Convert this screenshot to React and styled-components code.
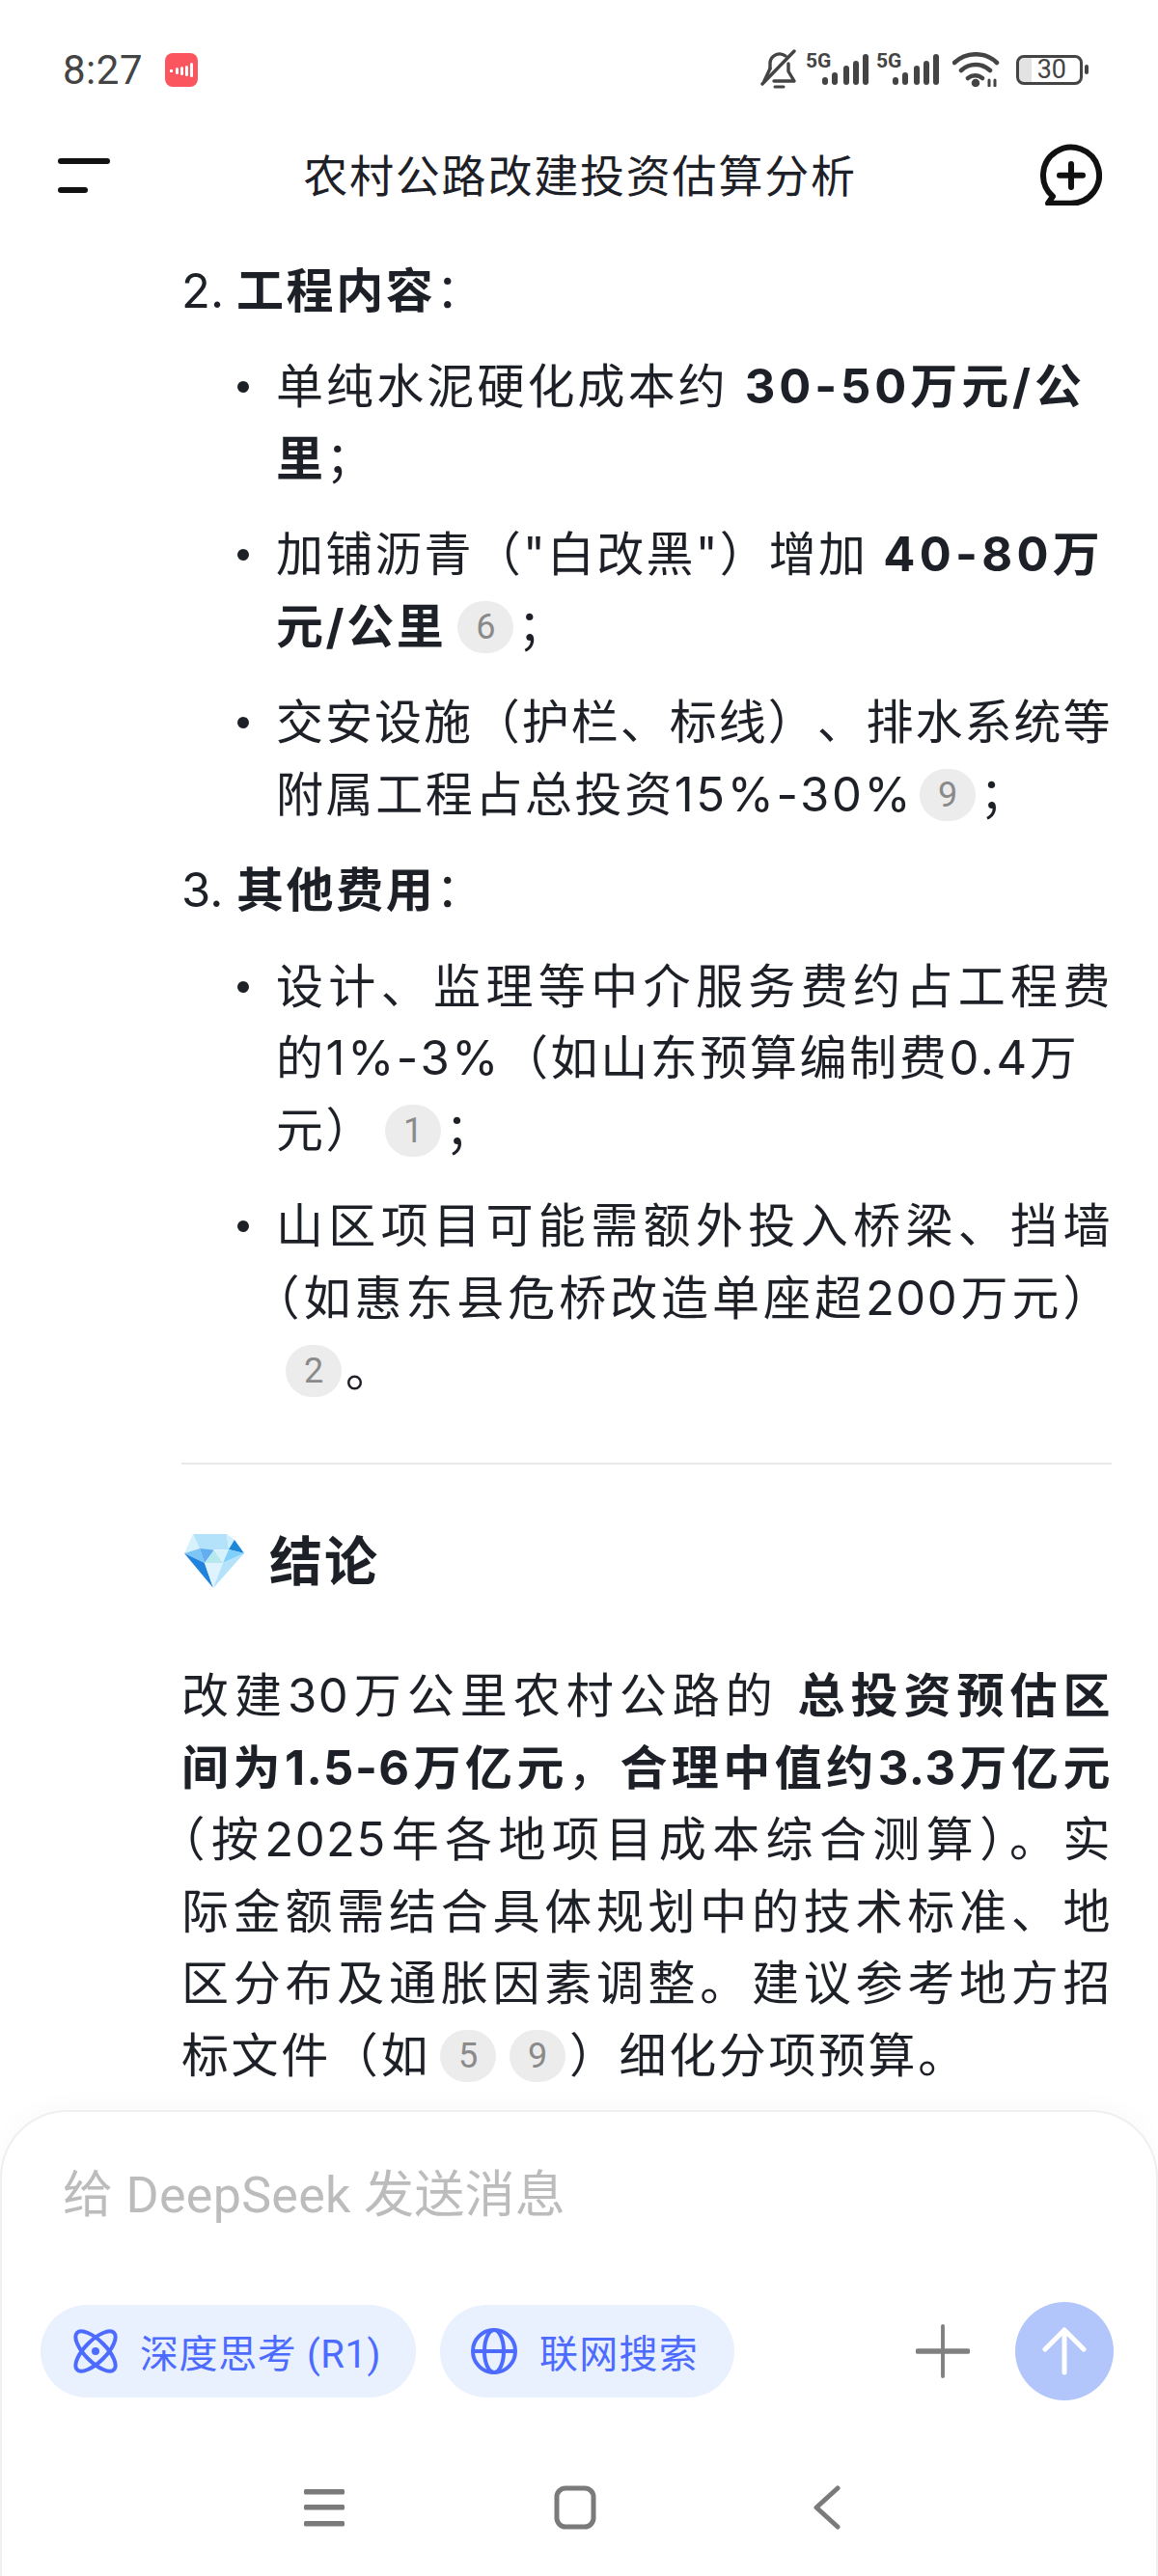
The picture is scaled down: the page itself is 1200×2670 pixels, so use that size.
import React from 'react';
import styled, { createGlobalStyle, css } from 'styled-components';

const GlobalStyle = createGlobalStyle`
	html, body {
		margin: 0;
		padding: 0;
		background: #fff;
	}
	body {
		font-family: "Noto Sans CJK SC", "Noto Sans", sans-serif;
		color: #1d2027;
	}
`;

const Page = styled.div`
	width: 1200px;
	height: 2670px;
	display: flex;
	flex-direction: column;
	overflow: hidden;
	background: #fff;
`;

const StatusBar = styled.div`
	height: 144px;
	flex-shrink: 0;
	box-sizing: border-box;
	padding: 0 72px 0 65px;
	display: flex;
	align-items: center;
`;

const Time = styled.span`
	font-family: "Roboto", sans-serif;
	font-size: 42px;
	color: #444;
	letter-spacing: 0.5px;
`;

const AppBadge = styled.svg`
	width: 34px;
	height: 35px;
	margin-left: 23px;
`;

const StatusIcons = styled.div`
	margin-left: auto;
	display: flex;
	align-items: center;
	gap: 8px;
`;

const WifiIcon = styled.svg`
	width: 49px;
	height: 36px;
	margin: 0 9px 0 6px;
`;

const Battery = styled.div`
	width: 69px;
	height: 31px;
	box-sizing: border-box;
	border: 3px solid #444;
	border-radius: 8px;
	display: flex;
	align-items: center;
	justify-content: flex-end;
	padding-right: 14px;
	font-family: "Roboto", sans-serif;
	font-size: 27px;
	color: #444;
	background: linear-gradient(to right, #e3e3e3 0, #e3e3e3 16px, #fff 16px);
	background-clip: content-box;
	background-origin: border-box;
`;

const BatteryCap = styled.div`
	width: 4px;
	height: 10px;
	border-radius: 2px;
	background: #444;
	margin-left: -6px;
`;

const Header = styled.div`
	height: 76px;
	flex-shrink: 0;
	box-sizing: border-box;
	padding: 0 58px 0 60px;
	display: grid;
	grid-template-columns: 1fr auto 1fr;
	align-items: center;
`;

const Title = styled.div`
	font-size: 46px;
	letter-spacing: 1.8px;
	font-weight: 400;
	white-space: nowrap;
	padding-bottom: 6px;
`;

const NewChat = styled.svg`
	width: 64px;
	height: 64px;
	justify-self: end;
	margin-bottom: 2px;
`;

const Content = styled.div`
	flex: 1;
	min-height: 0;
	overflow: hidden;
	box-sizing: border-box;
	padding: 44.5px 48px 0 188px;
	font-family: "Inter", "Noto Sans CJK SC", sans-serif;
	font-size: 49px;
	line-height: 74.5px;
	letter-spacing: 2.6px;
	text-spacing-trim: space-all;
`;

const Line = styled.div`
	white-space: nowrap;
	${(p) => p.$track && `letter-spacing: ${p.$track};`}
	${(p) => p.$fit && css`
		letter-spacing: 1.5px;
		text-align: justify;
		text-align-last: justify;
	`}
	${(p) => p.$trim && 'text-spacing-trim: trim-start;'}
`;

const OrderedRow = styled.div`
	display: flex;
	margin-top: ${(p) => (p.$first ? '0' : '25px')};
`;

const OrderNum = styled.span`
	width: 57px;
	flex-shrink: 0;
	letter-spacing: 0;
`;

const BulletRow = styled.div`
	display: flex;
	margin: 25px 0 0 58px;
`;

const ItemBody = styled.div`
	flex: 1;
	min-width: 0;
`;

const Dot = styled.span`
	width: 12px;
	height: 12px;
	flex-shrink: 0;
	border-radius: 50%;
	background: #1d2027;
	margin: 31px 28px 0 0;
`;

const Strong = styled.strong`
	font-weight: 700;
	${(p) => p.$track && `letter-spacing: ${p.$track};`}
`;

const Ref = styled.span`
	display: inline-flex;
	align-items: center;
	justify-content: center;
	width: 58px;
	height: 54px;
	margin: 0 4px 0 ${(p) => p.$lead || '10px'};
	border-radius: 27px;
	background: #ececec;
	color: #8a8a8a;
	font-family: "Roboto", sans-serif;
	font-size: 36px;
	line-height: 1;
	letter-spacing: 0;
	vertical-align: 4.5px;
`;

const Divider = styled.hr`
	margin: 58.5px 0 0;
	border: 0;
	height: 2px;
	background: #e8e8e8;
`;

const SectionHead = styled.div`
	margin-top: 62.5px;
	display: flex;
	align-items: center;
	gap: 21px;
	font-size: 55px;
	font-weight: 700;
	letter-spacing: 2px;
`;

const GemIcon = styled.svg`
	width: 70px;
	height: 64px;
	flex-shrink: 0;
`;

const Paragraph = styled.div`
	margin-top: 66px;
`;

const Composer = styled.div`
	height: 483px;
	flex-shrink: 0;
	box-sizing: border-box;
	padding-top: 57px;
	background: #fff;
	border: 2px solid #efefef;
	border-bottom: 0;
	border-radius: 70px 70px 0 0;
	box-shadow: 0 -6px 24px rgba(0, 0, 0, 0.025);
`;

const Placeholder = styled.div`
	height: 60px;
	line-height: 60px;
	padding-left: 63px;
	font-family: "Roboto", "Noto Sans CJK SC", sans-serif;
	font-size: 52px;
	letter-spacing: 0.3px;
	color: #bcbcbc;
	white-space: nowrap;
`;

const ToolRow = styled.div`
	margin-top: 80px;
	padding: 0 44px 0 40px;
	display: flex;
	align-items: center;
	gap: 25px;
`;

const Pill = styled.div`
	height: 96px;
	box-sizing: border-box;
	padding: 0 ${(p) => p.$right || '36px'} 0 ${(p) => p.$left || '34px'};
	display: flex;
	align-items: center;
	gap: 23px;
	border-radius: 48px;
	background: #e9f0fe;
	color: #4d6bfe;
	font-family: "Roboto", "Noto Sans CJK SC", sans-serif;
	font-size: 40px;
	letter-spacing: ${(p) => p.$track || '0.6px'};
	white-space: nowrap;
`;

const PlusIcon = styled.svg`
	width: 56px;
	height: 56px;
	margin-left: auto;
	margin-right: 22px;
`;

const SendButton = styled.div`
	width: 102px;
	height: 102px;
	border-radius: 50%;
	background: #b2c6fb;
	display: flex;
	align-items: center;
	justify-content: center;
`;

const NavBar = styled.div`
	margin-top: 88px;
	padding-right: 8px;
	display: flex;
	justify-content: center;
	gap: 200px;
`;

const NavIcon = styled.svg`
	width: 60px;
	height: 46px;
`;

const Signal = () => (
	<svg width="65" height="44" viewBox="0 -4 65 44">
		<text x="0" y="16" fontFamily="Roboto, sans-serif" fontSize="21" fontWeight="700" fill="#444">5G</text>
		<rect x="17" y="26" width="6" height="8" rx="3" fill="#444" />
		<rect x="27" y="21" width="6" height="13" rx="3" fill="#444" />
		<rect x="39" y="14" width="6" height="20" rx="3" fill="#444" />
		<rect x="49" y="9" width="6" height="25" rx="3" fill="#444" />
		<rect x="59" y="2" width="6" height="32" rx="3" fill="#444" />
	</svg>
);

const App = () => {
	return (
		<Page>
			<GlobalStyle />
			<StatusBar>
				<Time>8:27</Time>
				<AppBadge viewBox="0 0 34 35">
					<rect width="34" height="35" rx="8" fill="#fb5560" />
					<g fill="#fff">
						<rect x="5" y="17" width="3" height="3" />
						<rect x="11" y="15" width="3" height="7" rx="1.5" />
						<rect x="16" y="14" width="3" height="9" rx="1.5" />
						<rect x="21" y="13" width="3" height="11" rx="1.5" />
						<rect x="26" y="10" width="3" height="15" rx="1.5" />
					</g>
				</AppBadge>
				<StatusIcons>
					<svg width="39" height="42" viewBox="0 0 39 42" fill="none" stroke="#444" strokeWidth="3.4" strokeLinecap="round" strokeLinejoin="round">
						<path d="M10 20V14a10 10 0 0 1 16-7" />
						<path d="M29 15v8l6 10H14" />
						<path d="M10 20l-6 13" />
						<path d="M2 36L35 2" />
						<path d="M15 39h9" strokeWidth="3" />
					</svg>
					<Signal />
					<Signal />
					<WifiIcon viewBox="0 0 49 36" fill="none" stroke="#444" strokeWidth="4.5" strokeLinecap="round">
						<path d="M2 11a32 32 0 0 1 44 0" />
						<path d="M9 19a22 22 0 0 1 30 0" />
						<path d="M16 27a12 12 0 0 1 15 0" />
						<circle cx="24" cy="32" r="2" fill="#444" />
						<path d="M38 29v6M44 29v6" strokeWidth="3" />
					</WifiIcon>
					<Battery>30</Battery>
					<BatteryCap />
				</StatusIcons>
			</StatusBar>

			<Header>
				<svg width="54" height="36" viewBox="0 0 54 36">
					<rect width="54" height="6" rx="3" fill="#111" />
					<rect y="30" width="31" height="6" rx="3" fill="#111" />
				</svg>
				<Title>农村公路改建投资估算分析</Title>
				<NewChat viewBox="18 9 64 64" fill="none" stroke="#111" strokeWidth="6" strokeLinecap="round" strokeLinejoin="round">
					<path d="M50 70.7H26L31 63.6A29 29 0 1 1 50 70.7Z" />
					<path d="M38 41.7H62M50 30V54" />
				</NewChat>
			</Header>

			<Content>
				<OrderedRow $first>
					<OrderNum>2.</OrderNum>
					<Line><Strong>工程内容</Strong>：</Line>
				</OrderedRow>
				<BulletRow>
					<Dot />
					<ItemBody>
						<Line $track="3.1px">单纯水泥硬化成本约 <Strong $track="3.9px">30-50万元/公</Strong></Line>
						<Line><Strong>里</Strong>；</Line>
					</ItemBody>
				</BulletRow>
				<BulletRow>
					<Dot />
					<ItemBody>
						<Line $track="2.2px">加铺沥青（"白改黑"）增加 <Strong $track="4.3px">40-80万</Strong></Line>
						<Line><Strong>元/公里</Strong><Ref $lead="12px">6</Ref>；</Line>
					</ItemBody>
				</BulletRow>
				<BulletRow>
					<Dot />
					<ItemBody>
						<Line $fit>交安设施（护栏、标线）、排水系统等</Line>
						<Line>附属工程占总投资15%-30%<Ref $lead="7px">9</Ref>；</Line>
					</ItemBody>
				</BulletRow>
				<OrderedRow>
					<OrderNum>3.</OrderNum>
					<Line><Strong>其他费用</Strong>：</Line>
				</OrderedRow>
				<BulletRow>
					<Dot />
					<ItemBody>
						<Line $fit>设计、监理等中介服务费约占工程费</Line>
						<Line>的1%-3%（如山东预算编制费0.4万</Line>
						<Line>元）<Ref>1</Ref>；</Line>
					</ItemBody>
				</BulletRow>
				<BulletRow>
					<Dot />
					<ItemBody>
						<Line $fit>山区项目可能需额外投入桥梁、挡墙</Line>
						<Line $fit $trim>（如惠东县危桥改造单座超200万元）</Line>
						<Line><Ref>2</Ref>。</Line>
					</ItemBody>
				</BulletRow>

				<Divider />

				<SectionHead>
					<GemIcon viewBox="8 8 70 64">
						<path d="M20 12H55L57 28H42H27Z" fill="#b5e2fb" />
						<path d="M20 12L27 27L11 32Z" fill="#d7f1fd" />
						<path d="M55 12L63 18L57 28Z" fill="#cdeefc" />
						<path d="M63 18L73 32L57 28Z" fill="#1b87d6" />
						<path d="M11 32L27 27L32 42Z" fill="#7cc5f7" />
						<path d="M27 27L42 28.5L32 42Z" fill="#62aeef" />
						<path d="M42 28.5L51 42H32Z" fill="#b5e9ee" />
						<path d="M42 28.5L57 28L51 42Z" fill="#d6f1fb" />
						<path d="M57 28L73 32L51 42Z" fill="#7fd0fa" />
						<path d="M11 32L32 42L41 68Z" fill="#2283dc" />
						<path d="M32 42H51L41 68Z" fill="#dff3fe" />
						<path d="M51 42L73 32L41 68Z" fill="#b4e2fa" />
					</GemIcon>
					结论
				</SectionHead>

				<Paragraph>
					<Line $fit>改建30万公里农村公路的 <Strong>总投资预估区</Strong></Line>
					<Line $fit><Strong>间为1.5-6万亿元</Strong>，<Strong>合理中值约3.3万亿元</Strong></Line>
					<Line $fit $trim>（按2025年各地项目成本综合测算）。实</Line>
					<Line $fit>际金额需结合具体规划中的技术标准、地</Line>
					<Line $fit>区分布及通胀因素调整。建议参考地方招</Line>
					<Line>标文件（如<Ref>5</Ref><Ref>9</Ref>）细化分项预算。</Line>
				</Paragraph>
			</Content>

			<Composer>
				<Placeholder>给 DeepSeek 发送消息</Placeholder>
				<ToolRow>
					<Pill>
						<svg width="46" height="46" viewBox="0 0 46 46" fill="none" stroke="#4d6bfe" strokeWidth="4">
							<ellipse cx="23" cy="23" rx="27" ry="11" transform="rotate(45 23 23)" />
							<ellipse cx="23" cy="23" rx="27" ry="11" transform="rotate(-45 23 23)" />
							<circle cx="23" cy="23" r="4" fill="#4d6bfe" stroke="none" />
						</svg>
						深度思考 (R1)
					</Pill>
					<Pill $right="37px" $left="32px" $track="1.2px">
						<svg width="48" height="48" viewBox="0 0 48 48" fill="none" stroke="#4d6bfe" strokeWidth="4">
							<circle cx="24" cy="24" r="22" />
							<ellipse cx="24" cy="24" rx="10" ry="22" />
							<path d="M2 24H46" />
						</svg>
						联网搜索
					</Pill>
					<PlusIcon viewBox="0 0 58 58" fill="none" stroke="#808080" strokeLinecap="round">
						<path d="M2 29H56" strokeWidth="5.5" />
						<path d="M29 2V56" strokeWidth="4" />
					</PlusIcon>
					<SendButton>
						<svg width="46" height="50" viewBox="0 0 46 50" fill="none" stroke="#fff" strokeWidth="5" strokeLinecap="round" strokeLinejoin="round">
							<path d="M23 47V3M3 23L23 3L43 23" />
						</svg>
					</SendButton>
				</ToolRow>
				<NavBar>
					<NavIcon viewBox="0 0 60 46" fill="#7a7a7a">
						<rect x="9" y="4" width="42" height="5.5" rx="1.5" />
						<rect x="9" y="20" width="42" height="5.5" rx="1.5" />
						<rect x="9" y="37" width="42" height="5.5" rx="1.5" />
					</NavIcon>
					<NavIcon viewBox="0 0 60 46" fill="none" stroke="#7a7a7a" strokeWidth="5">
						<rect x="11" y="3" width="38" height="40" rx="9" />
					</NavIcon>
					<NavIcon viewBox="0 0 60 46" fill="none" stroke="#7a7a7a" strokeWidth="5" strokeLinecap="round" strokeLinejoin="round">
						<path d="M42 3L20 23L42 43" />
					</NavIcon>
				</NavBar>
			</Composer>
		</Page>
	);
};

export default App;
